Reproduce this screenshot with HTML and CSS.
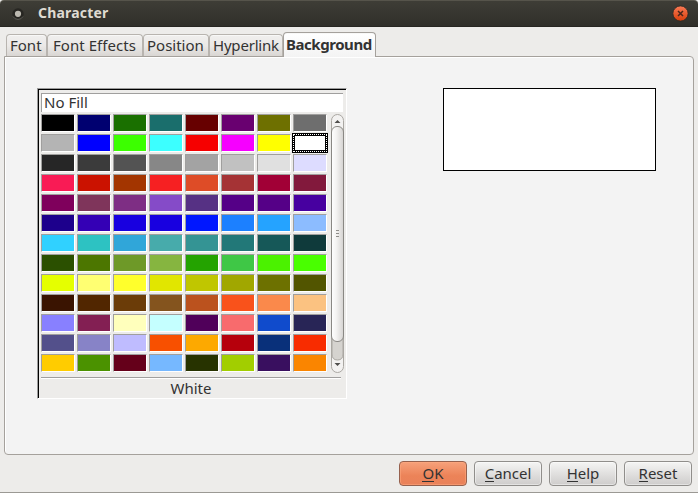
FILE: index.html
```html
<!DOCTYPE html>
<html lang="en">
<head>
<meta charset="utf-8">
<title>Character</title>
<link rel="stylesheet" href="styles.css">
</head>
<body>
<div class="window">
  <header class="titlebar">
    <svg class="menu-dot" width="14" height="14" viewBox="0 0 14 14"><circle cx="7" cy="7" r="5.7" fill="#272622"/><path d="M2 9.5A5.7 5.7 0 0 0 12 9.5" fill="none" stroke="#5c5b55"/><circle cx="7" cy="6.8" r="3.1" fill="#bcb9b0"/></svg>
    <h1>Character</h1>
    <svg class="close" width="17" height="17" viewBox="0 0 17 17"><defs><linearGradient id="c" x2="0" y2="1"><stop stop-color="#fa7b56"/><stop offset="1" stop-color="#d73d0a"/></linearGradient></defs><circle cx="8.5" cy="8.5" r="7.6" fill="url(#c)" stroke="#2b2a25" stroke-width=".8"/><path d="M6 6l5 5M11 6l-5 5" stroke="#49251a" stroke-width="1.5"/></svg>
  </header>
  <nav class="tabs">
    <div class="tab font"><span>Font</span></div>
    <div class="tab effects"><span>Font Effects</span></div>
    <div class="tab position"><span>Position</span></div>
    <div class="tab hyper"><span>Hyperlink</span></div>
    <div class="tab active"><span>Background</span></div>
  </nav>
  <main class="panel">
    <section class="picker">
      <div class="nofill"><span>No Fill</span></div>
      <div class="palette">
        <div class="grid" id="grid"></div>
        <svg class="scroll" width="13" height="259" viewBox="0 0 13 259">
          <defs><linearGradient id="t"><stop stop-color="#fff"/><stop offset=".4" stop-color="#f4f3f2"/><stop offset="1" stop-color="#d5d3d1"/></linearGradient></defs>
          <rect x=".5" y=".5" width="12" height="258" rx="6" fill="#f3f2f1" stroke="#aaa7a2"/>
          <path d="M1 222h11v18q0 6-5.500 6T1 240z" fill="#d5d3cf" stroke="#aaa7a2"/>
          <rect x=".5" y="12.500" width="12" height="215" rx="5.500" fill="url(#t)" stroke="#8a8884"/>
          <path d="M3.500 9L6.500 6l3 3zM3.500 249h6l-3 3z" fill="#504f4d"/>
          <path d="M5 116.500h3M5 119.500h3M5 122.500h3" stroke="#8f8d8a"/>
        </svg>
      </div>
      <div class="name"><span>White</span></div>
    </section>
    <div class="preview"></div>
  </main>
  <footer class="buttons">
    <button class="ok"><span><u>O</u>K</span></button>
    <button class="cancel"><span><u>C</u>ancel</span></button>
    <button class="help"><span><u>H</u>elp</span></button>
    <button class="reset"><span><u>R</u>eset</span></button>
  </footer>
</div>
<script src="palette.js"></script>
</body>
</html>
```
FILE: styles.css
```css
* { box-sizing: border-box; }
body { margin: 0; font: 15px/20px "Noto Sans", "Open Sans", sans-serif; color: #333; }
.window { width: 698px; height: 493px; background: #edecea; border-bottom: 1px solid #9b9994; overflow: hidden; }
.titlebar { height: 27px; display: flex; align-items: center; padding: 0 9px 0 11px; background: linear-gradient(#3e3d36, #302f2a); border-top: 1px solid #56544b; border-bottom: 1px solid #272622; border-radius: 4px 4px 0 0; }
h1 { flex: 1; margin: 0 0 2px 13px; font-size: 14px; line-height: 20px; font-weight: 700; letter-spacing: .2px; color: #dfdbd2; }
.tabs { height: 29px; padding: 5px 0 0 6px; display: flex; align-items: flex-end; }
.tab { height: 22px; border: 1px solid #b8b4af; border-bottom: 0; border-radius: 4px 4px 0 0; background: linear-gradient(#f0efee, #ebe9e7 50%, #d9d6d3); box-shadow: inset 0 1px #f8f8f7; padding-left: 3px; line-height: 20px; white-space: nowrap; }
.font { width: 41px; }
.effects { width: 96px; padding-left: 5px; letter-spacing: .05px; }
.position { width: 66px; padding-left: 3px; }
.hyper { width: 74px; padding-left: 3px; letter-spacing: -.2px; }
.active { position: relative; width: 93px; height: 25px; margin-bottom: -1px; padding-left: 2px; background: linear-gradient(#fff, #f3f3f3); border-color: #a5a19c; font-weight: 700; letter-spacing: -.45px; line-height: 23px; }
.panel { width: 690px; height: 399px; margin-left: 4px; padding: 31px 0 0 32px; display: flex; align-items: flex-start; gap: 96px; background: #f3f3f3; border: 1px solid #a5a19c; border-radius: 0 4px 4px 4px; box-shadow: inset 1px 1px #fff; }
.picker { width: 310px; height: 311px; background: #edecea; border: 1px solid #9b9b9b; border-right-color: #fff; border-bottom-color: #fff; box-shadow: inset 1px 1px #000; padding: 4px 2px 0 3px; }
.nofill { width: 302px; height: 19px; background: #fff; border-top: 1px solid #a09f9e; border-left: 1px solid #a09f9e; padding-left: 2px; line-height: 16px; }
.palette { display: flex; align-items: flex-start; gap: 4px; margin-top: 2px; height: 259px; }
.grid { width: 286px; display: grid; grid-template-columns: repeat(8, 34px); grid-auto-rows: 18px; gap: 2px; }
.grid i { height: 18px; border: 1px solid #a09f9e; border-right-color: #fff; border-bottom-color: #fff; }
.grid .chosen { position: relative; margin: -1px; height: 20px; border: 3px solid #000; }
.chosen::after { content: ""; position: absolute; inset: -2px; border: 1px dotted #fff; }
.name { width: 300px; margin-top: 4px; border-top: 1px solid #a09f9e; box-shadow: inset 0 1px #fff; text-align: center; line-height: 21px; }
.preview { width: 213px; height: 83px; border: 1px solid #000; background: #fff; }
.buttons { display: flex; justify-content: flex-end; gap: 7px; padding: 6px 6px 0; }
button { width: 68px; height: 25px; padding: 0; font: inherit; line-height: 21px; color: #333; border: 1px solid #908e8b; border-radius: 4px; background: linear-gradient(#f5f5f4, #e1e0df 50%, #cecccb); box-shadow: inset 0 0 0 1px #ffffff70; }
.ok { background: linear-gradient(#f6a17b, #ec8358 60%, #e9815a); border-color: #96614e; box-shadow: inset 0 0 0 1px #ffac8280; }
u { text-decoration: none; background: linear-gradient(#333, #333) 0 18px / 100% 1px no-repeat; }
span { display: inline-block; white-space: nowrap; }
```
FILE: palette.js
```js
const rows = [
  "000000 000070 1a7000 1a6e6c 670000 690070 6e7000 6e6e6e",
  "b4b4b4 0000ff 3cff00 3cffff f60000 f600ff ffff00 ffffff",
  "262626 3b3b3b 535353 878787 a3a3a3 c1c1c1 e0e0e0 dddcff",
  "f91b55 cb1200 a33500 f62022 de4c27 a53335 a10036 82193c",
  "7f005c 7f355b 7e2e84 854bc8 563184 550087 550087 4700a0",
  "1d008c 3400b5 1800e0 1800e0 0017ff 1c80ff 25a3ff 8cbcff",
  "30d1ff 2dc2c2 30a6d9 47abab 349494 227878 165858 0f3a3b",
  "2b5000 4c7600 6e9928 86b540 24a300 3fc746 4bf200 49ff00",
  "e5ff00 ffff72 ffff2c e1e600 c0c600 a1a700 6d7100 525500",
  "3a1401 512600 6b3c08 84541e bb521e f9521b fa894b fbc281",
  "8880ff 831f53 ffffbc c5ffff 50005a f86b6d 104bcc 282556",
  "53508b 8783c7 bfbcff f85000 fda900 b6000c 09307a f82c00",
  "ffcc00 4b9200 65001a 76b8ff 273300 a2ce00 390f5f fa8500"
];
const grid = document.getElementById("grid");
rows.join(" ").split(" ").forEach((color, index) => {
  const cell = document.createElement("i");
  cell.style.backgroundColor = "#" + color;
  if (index === 15) cell.className = "chosen";
  grid.append(cell);
});
```
